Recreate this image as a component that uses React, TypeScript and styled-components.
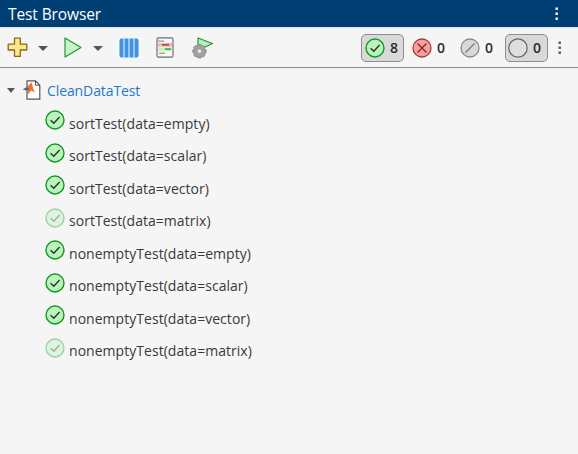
import { FC } from "react";
import styled, { createGlobalStyle } from "styled-components";

const GlobalStyle = createGlobalStyle`
  html, body {
    margin: 0;
    padding: 0;
    background: #f5f5f5;
  }
`;

const tests = [
  { name: "sortTest(data=empty)", faded: false },
  { name: "sortTest(data=scalar)", faded: false },
  { name: "sortTest(data=vector)", faded: false },
  { name: "sortTest(data=matrix)", faded: true },
  { name: "nonemptyTest(data=empty)", faded: false },
  { name: "nonemptyTest(data=scalar)", faded: false },
  { name: "nonemptyTest(data=vector)", faded: false },
  { name: "nonemptyTest(data=matrix)", faded: true },
];

const Kebab: FC<{ color: string }> = ({ color }) => (
  <svg width="4" height="14" viewBox="0 0 4 14">
    <rect x="0.5" y="0.5" width="2.4" height="2.4" fill={color} />
    <rect x="0.5" y="5.5" width="2.4" height="2.4" fill={color} />
    <rect x="0.5" y="10.5" width="2.4" height="2.4" fill={color} />
  </svg>
);

const Caret: FC = () => (
  <svg width="10" height="5" viewBox="0 0 10 5">
    <path d="M0 0H10L5 5Z" fill="#555" />
  </svg>
);

const PlusIcon: FC = () => (
  <svg width="21" height="21" viewBox="0 0 21 21">
    <path
      d="M7.5 1.2H13.3V7.2H19.8V13H13.3V19.4H7.5V13H1.2V7.2H7.5Z"
      fill="#ffe68a"
      stroke="#8a6a14"
      strokeWidth="1.3"
      strokeLinejoin="round"
    />
  </svg>
);

const PlayIcon: FC = () => (
  <svg width="18" height="21" viewBox="0 0 18 21">
    <path
      d="M1 1V20L17 10.5Z"
      fill="#c6f2c4"
      stroke="#1f9a35"
      strokeWidth="1.2"
      strokeLinejoin="round"
    />
  </svg>
);

const ColumnsIcon: FC = () => (
  <svg width="20" height="20" viewBox="0 0 20 20">
    <rect x="0.5" y="0.5" width="19" height="19" rx="2" fill="#3d94e4" />
    <path d="M5 0V20M10 0V20M15 0V20" stroke="#e8f1fa" strokeWidth="1.1" />
  </svg>
);

const ReportIcon: FC = () => (
  <svg width="18" height="21" viewBox="0 0 18 21">
    <rect x="1" y="0.8" width="16" height="19.4" rx="1.5" fill="#f7f7f7" stroke="#6e6e6e" strokeWidth="1.2" />
    <rect x="2" y="3.5" width="6" height="1.3" fill="#9a9a9a" />
    <rect x="2" y="6" width="14" height="3.6" fill="#f7b3b3" />
    <rect x="6" y="7.2" width="7" height="1.4" fill="#a83030" />
    <rect x="2" y="10.3" width="14" height="3.8" fill="#c2f5bd" />
    <rect x="9" y="11.4" width="6" height="1.4" fill="#2b9a3c" />
    <rect x="3" y="15.6" width="6" height="1.3" fill="#9a9a9a" />
  </svg>
);

const GearPlayIcon: FC = () => (
  <svg width="22" height="22" viewBox="0 0 22 22">
    <path d="M6 1V13L20.5 6.5Z" fill="#b9eeb8" stroke="#1f9a35" strokeWidth="1.2" strokeLinejoin="round" />
    <path
      d="M6 7.5H9L9.4 9.4L11.2 8.4L13.3 10.5L12.2 12.3L14.2 12.8V15.7L12.2 16.2L13.3 18L11.2 20.1L9.4 19L9 21H6L5.5 19L3.7 20.1L1.6 18L2.7 16.2L0.8 15.7V12.8L2.7 12.3L1.6 10.5L3.7 8.4L5.5 9.4Z"
      fill="#a3a3a3"
      stroke="#777"
      strokeWidth="0.7"
      strokeLinejoin="round"
    />
    <circle cx="7.5" cy="14.2" r="2.4" fill="#e6e6e6" stroke="#777" strokeWidth="0.6" />
  </svg>
);

const PassIcon: FC<{ size?: number; faded?: boolean }> = ({ size = 20, faded }) => (
  <svg width={size} height={size} viewBox="0 0 20 20" opacity={faded ? 0.38 : 1}>
    <circle cx="10" cy="10" r="9" fill="#bdf2bf" stroke="#119a22" strokeWidth="1.4" />
    <path d="M5.6 10.2L8.8 13.2L14.6 7" fill="none" stroke="#1c3d20" strokeWidth="1.4" />
  </svg>
);

const FailIcon: FC = () => (
  <svg width="20" height="20" viewBox="0 0 20 20">
    <circle cx="10" cy="10" r="9" fill="#f7a0a0" stroke="#a83a3a" strokeWidth="1.3" />
    <path d="M5.5 5.5L14.5 14.5M14.5 5.5L5.5 14.5" stroke="#8c2323" strokeWidth="1.3" />
  </svg>
);

const SkipIcon: FC = () => (
  <svg width="20" height="20" viewBox="0 0 20 20">
    <circle cx="10" cy="10" r="9" fill="#d8d8d8" stroke="#8a8a8a" strokeWidth="1.3" />
    <path d="M5.5 14.5L14.5 5.5" stroke="#777" strokeWidth="1.3" />
  </svg>
);

const NotRunIcon: FC = () => (
  <svg width="20" height="20" viewBox="0 0 20 20">
    <circle cx="10" cy="10" r="9.2" fill="#dedede" stroke="#666" strokeWidth="1.2" />
  </svg>
);

const FileIcon: FC = () => (
  <svg width="19" height="20" viewBox="0 0 19 20">
    <path d="M5 0.8H13.5L17.8 5.2V19.2H5Z" fill="#fff" stroke="#555" strokeWidth="1.2" strokeLinejoin="round" />
    <path d="M13.5 0.8V5.2H17.8" fill="none" stroke="#555" strokeWidth="1" />
    <path d="M0.8 9.5L5 7L9.5 2.2L11.5 9.5L13 12.5L9 10.5L6 14.5L5 10.5Z" fill="#e8752a" />
    <path d="M0.8 9.5L5 7L7 9L5 10.5Z" fill="#2b6fa8" />
  </svg>
);

const App: FC = () => (
  <Page>
    <GlobalStyle />
    <TitleBar>
      <Title>Test Browser</Title>
      <Kebab color="#fff" />
    </TitleBar>
    <Toolbar>
      <ToolGroup>
        <PlusIcon />
        <CaretSlot $left={10}>
          <Caret />
        </CaretSlot>
        <ToolSlot $left={16}>
          <PlayIcon />
        </ToolSlot>
        <CaretSlot $left={11}>
          <Caret />
        </CaretSlot>
        <ToolSlot $left={16}>
          <ColumnsIcon />
        </ToolSlot>
        <ToolSlot $left={17}>
          <ReportIcon />
        </ToolSlot>
        <ToolSlot $left={18}>
          <GearPlayIcon />
        </ToolSlot>
      </ToolGroup>
      <Summary>
        <Toggle $inset={3}>
          <PassIcon />
          <Count>8</Count>
        </Toggle>
        <Plain $width={48}>
          <FailIcon />
          <Count>0</Count>
        </Plain>
        <Plain $width={53}>
          <SkipIcon />
          <Count>0</Count>
        </Plain>
        <Toggle $inset={2}>
          <NotRunIcon />
          <Count>0</Count>
        </Toggle>
        <ToolbarKebab>
          <Kebab color="#555" />
        </ToolbarKebab>
      </Summary>
    </Toolbar>
    <Tree>
      <ClassRow>
        <Disclosure />
        <FileSlot>
          <FileIcon />
        </FileSlot>
        <ClassName>CleanDataTest</ClassName>
      </ClassRow>
      {tests.map((t) => (
        <TestRow key={t.name}>
          <IconSlot>
            <PassIcon faded={t.faded} />
          </IconSlot>
          <TestName>{t.name}</TestName>
        </TestRow>
      ))}
    </Tree>
  </Page>
);

const Page = styled.div`
  width: 578px;
  height: 454px;
  overflow: hidden;
  background: #f5f5f5;
  display: flex;
  flex-direction: column;
  font-family: "Open Sans", "Noto Sans", sans-serif;
`;

const TitleBar = styled.div`
  height: 27px;
  flex: none;
  background: #003f73;
  display: flex;
  align-items: center;
  justify-content: space-between;
  padding: 0 19px 0 8px;
  border-bottom: 1px solid #e4e4e4;
`;

const Title = styled.div`
  color: #fff;
  font-size: 15.5px;
  letter-spacing: -0.1px;
`;

const Toolbar = styled.div`
  height: 40px;
  flex: none;
  box-sizing: border-box;
  background: #f5f5f5;
  border-bottom: 1px solid #8a8a8a;
  display: flex;
  align-items: center;
  justify-content: space-between;
  padding: 0 16px 0 7px;
`;

const ToolGroup = styled.div`
  display: flex;
  align-items: center;
`;

const ToolSlot = styled.div<{ $left: number }>`
  display: flex;
  margin-left: ${(props) => props.$left}px;
`;

const CaretSlot = styled(ToolSlot)`
  padding-top: 1px;
`;

const Summary = styled.div`
  display: flex;
  align-items: center;
`;

const Toggle = styled.div<{ $inset: number }>`
  width: 43px;
  height: 28px;
  box-sizing: border-box;
  background: #d9d9d9;
  border: 1px solid #8e8e8e;
  border-radius: 5px;
  display: flex;
  align-items: center;
  padding-left: ${(props) => props.$inset}px;
  gap: 5px;
`;

const Plain = styled.div<{ $width: number }>`
  width: ${(props) => props.$width}px;
  display: flex;
  align-items: center;
  justify-content: flex-start;
  padding-left: 7.5px;
  box-sizing: border-box;
  gap: 5.5px;
`;

const Count = styled.span`
  font-size: 14px;
  font-weight: 600;
  color: #2b2b2b;
  line-height: 20px;
`;

const ToolbarKebab = styled.div`
  display: flex;
  margin-left: 10px;
`;

const Tree = styled.div`
  display: flex;
  flex-direction: column;
  padding-top: 8px;
`;

const ClassRow = styled.div`
  height: 31px;
  box-sizing: border-box;
  display: flex;
  align-items: center;
  padding: 0 0 2px 7px;
`;

const Disclosure = styled.span`
  width: 0;
  height: 0;
  margin: 0 7px 0 0;
  border-left: 4.5px solid transparent;
  border-right: 4.5px solid transparent;
  border-top: 5px solid #5a5a5a;
`;

const FileSlot = styled.div`
  display: flex;
  margin-top: -2px;
`;

const ClassName = styled.span`
  margin-left: 6px;
  font-size: 14px;
  letter-spacing: -0.1px;
  color: #1f78c8;
`;

const TestRow = styled.div`
  height: 32.5px;
  display: flex;
  align-items: center;
  padding-left: 45px;
`;

const IconSlot = styled.div`
  display: flex;
  margin-top: -6px;
`;

const TestName = styled.span`
  margin-left: 4px;
  font-size: 14px;
  letter-spacing: 0.04px;
  color: #3a3a3a;
`;

export default App;
